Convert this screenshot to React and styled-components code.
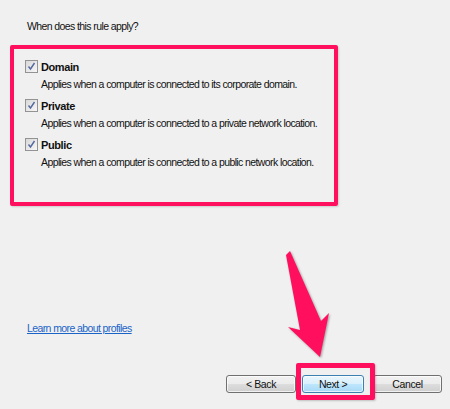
import React from 'react'
import styled, { createGlobalStyle } from 'styled-components'

const GlobalStyle = createGlobalStyle`
html, body {
  margin: 0;
  padding: 0;
  background: #f0f0f0;
}
`

const PINK = '#ff0f5e'

const Page = styled.div`
position: relative;
width: 450px;
height: 409px;
box-sizing: border-box;
display: flex;
flex-flow: column;
font-family: "Liberation Sans", Arial, sans-serif;
font-size: 10.5px;
letter-spacing: -0.6px;
color: #111;
background: #f0f0f0;
overflow: hidden;
`

const Title = styled.div`
margin: 20px 0 0 27px;
`

const RuleBox = styled.div`
margin: 13px 0 0 10px;
width: 328px;
height: 161px;
box-sizing: border-box;
border: 4px solid ${PINK};
border-radius: 2px;
padding: 11px 0 0 11px;
box-shadow: 1px 1px 2px rgba(0, 0, 0, 0.15);
display: flex;
flex-flow: column;
gap: 9px;
`

const Option = styled.div`
display: grid;
grid-template-columns: 16px auto;
row-gap: 5px;
align-items: center;
`

const Check = styled.span`
width: 13px;
height: 13px;
box-sizing: border-box;
border: 1px solid #939393;
background: linear-gradient(135deg, #d8d8d8, #f7f7f7);
display: flex;
align-items: center;
justify-content: center;
`

const Label = styled.span`
font-weight: bold;
font-size: 11px;
letter-spacing: -0.4px;
`

const Desc = styled.span`
grid-column: 2;
`

const Link = styled.a`
margin: auto 0 0 27px;
color: #1a64c8;
text-decoration: underline;
cursor: pointer;
`

const Footer = styled.div`
display: flex;
justify-content: flex-end;
align-items: center;
padding: 41px 8px 16px 0;
`

const Button = styled.button`
width: ${props => props.w}px;
height: 18px;
margin-left: ${props => props.gap}px;
padding: 0;
box-sizing: border-box;
border: 1px solid ${props => (props.primary ? '#3c7fb1' : '#707070')};
border-radius: 3px;
background: ${props => (props.primary
    ? 'linear-gradient(#eaf6fd 0%, #d9f0fc 50%, #bee6fd 51%, #a7d9f5 100%)'
    : 'linear-gradient(#f2f2f2 0%, #ebebeb 50%, #dddddd 51%, #cfcfcf 100%)')};
box-shadow: inset 0 0 0 1px rgba(255, 255, 255, 0.7);
font-family: "Liberation Sans", Arial, sans-serif;
font-size: 10.5px;
letter-spacing: -0.4px;
color: #111;
`

const NextWrap = styled.div`
position: relative;
margin-left: 6px;
display: flex;

&::after {
  content: '';
  position: absolute;
  top: -12px;
  left: -6px;
  right: -11px;
  bottom: -7px;
  border: 5px solid ${PINK};
  border-radius: 2px;
  box-shadow: 1px 1px 2px rgba(0, 0, 0, 0.2);
}
`

const Arrow = styled.svg`
position: absolute;
left: 0;
top: 0;
filter: drop-shadow(1px 1px 1px rgba(0, 0, 0, 0.35));
`

const CheckMark = () => (
  <svg width="9" height="9" viewBox="0 0 9 9">
    <path d="M1.5 4.5 L3.5 7 L7.5 1" fill="none" stroke="#5468a0" strokeWidth="1.4" />
  </svg>
)

const options = [
  { label: 'Domain', desc: 'Applies when a computer is connected to its corporate domain.' },
  { label: 'Private', desc: 'Applies when a computer is connected to a private network location.' },
  { label: 'Public', desc: 'Applies when a computer is connected to a public network location.' },
]

const App = () => (
  <Page>
    <GlobalStyle />
    <Title>When does this rule apply?</Title>

    <RuleBox>
      {options.map(o => (
        <Option key={o.label}>
          <Check><CheckMark /></Check>
          <Label>{o.label}</Label>
          <Desc>{o.desc}</Desc>
        </Option>
      ))}
    </RuleBox>

    <Link>Learn more about profiles</Link>

    <Footer>
      <Button w={70}>&lt; Back</Button>
      <NextWrap>
        <Button w={62} primary>Next &gt;</Button>
      </NextWrap>
      <Button w={69} gap={9}>Cancel</Button>
    </Footer>

    <Arrow width="450" height="409" viewBox="0 0 450 409">
      <polygon
        points="286,255 290,251 321,321 329,313 320,357 288,327 300,330"
        fill={PINK}
      />
    </Arrow>
  </Page>
)

export default App
